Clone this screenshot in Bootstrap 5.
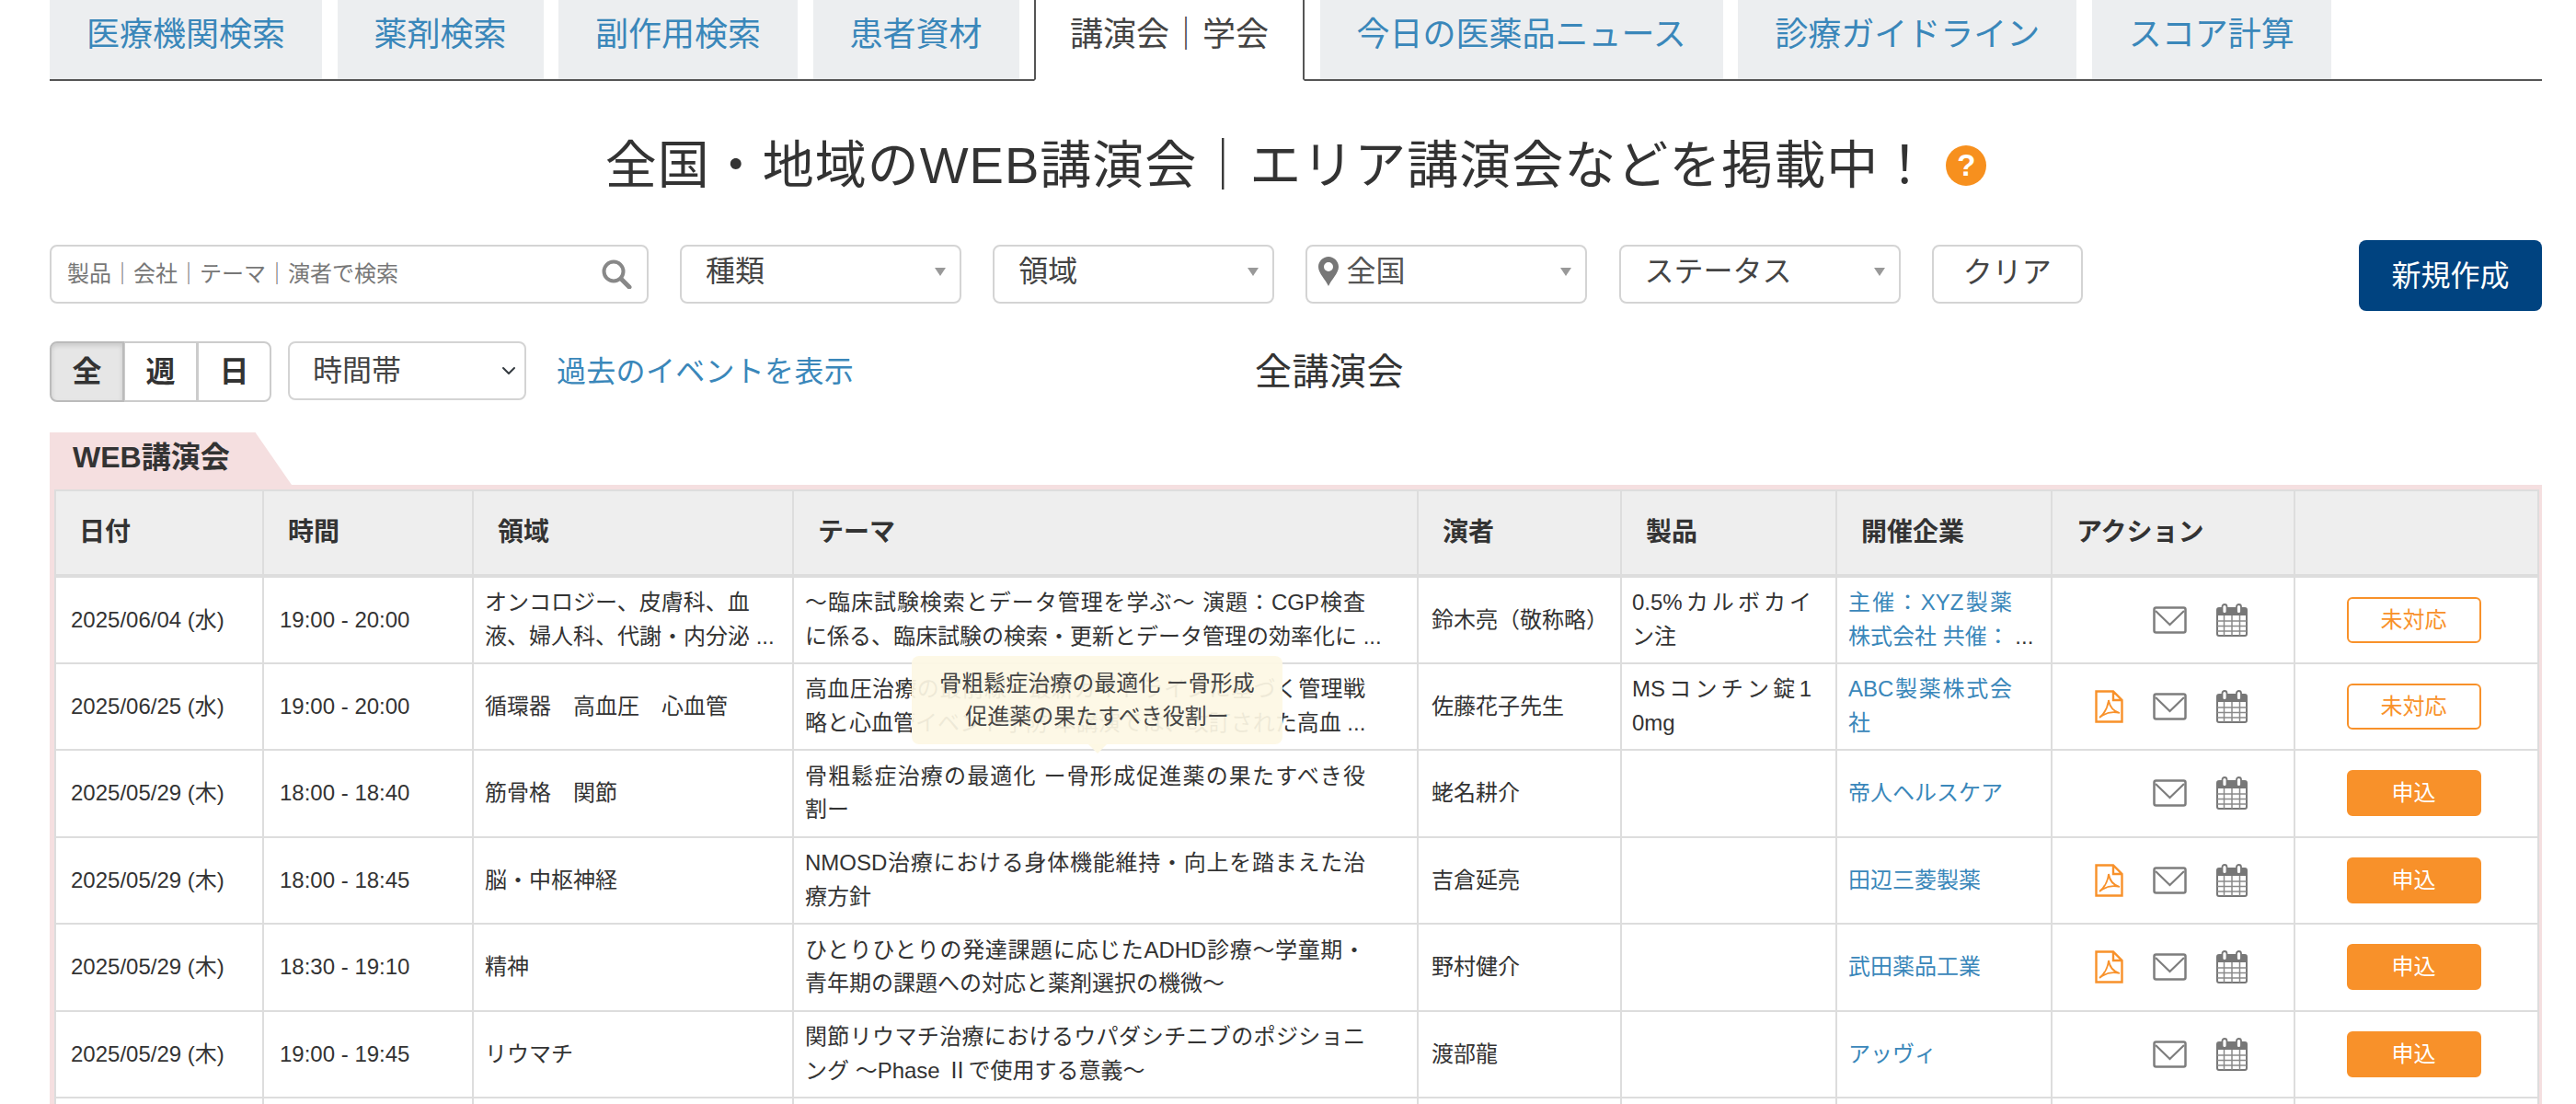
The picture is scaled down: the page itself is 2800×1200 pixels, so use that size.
<!DOCTYPE html>
<html lang="ja">
<head>
    <meta charset="UTF-8">
    <meta name="viewport" content="width=device-width, initial-scale=1.0">
    <title>講演会 | 学会</title>
    <link href="https://cdn.jsdelivr.net/npm/bootstrap@5.3.0/dist/css/bootstrap.min.css" rel="stylesheet">
    <style>
        html, body { height: 100vh; overflow: hidden; }
        body { font-family: "Liberation Sans", "Noto Sans CJK JP", sans-serif; font-size: 24px; color: #333; background: #fff; }
        a { color: #3a87ba; text-decoration: none; }
        .page-wrap { padding: 0 37px 0 54px; }

        .top-tabs { gap: 16.5px; border-bottom: 2px solid #555; height: 88px; flex-wrap: nowrap; }
        .top-tabs .nav-link { font-size: 36px; line-height: 48px; padding: 14px 40px 24px; height: 86px; margin-bottom: 0; background: #eceef0; color: #3a87ba; border: 0; border-radius: 0; }
        .top-tabs .nav-link.active { height: 88px; background: #fff; color: #444; border: 2px solid #555; border-top: 0; border-bottom: 2px solid #fff; padding: 14px 37px 22px; }

        .page-title { font-size: 56px; line-height: 80px; font-weight: 400; letter-spacing: 1px; margin: 52px 0 41px; color: #333; }
        .help-dot { width: 44px; height: 44px; border-radius: 50%; background: #f7901e; color: #fff; font-size: 33px; line-height: 44px; font-weight: 700; letter-spacing: 0; margin-left: 16px; }

        .filter-row { height: 77px; }
        .search-box, .pick-box, .clear-btn { height: 64px; margin-top: 5px; border: 2px solid #d4d4d4; border-radius: 8px; background: #fff; }
        .search-box { width: 651px; padding: 0 16px 0 17px; margin-right: 34px; font-size: 24px; color: #777; }
        .pick-box { width: 306px; margin-right: 34.2px; padding: 0 0 6px 26px; font-size: 32px; color: #444; position: relative; }
        .pick-box::after { content: ""; position: absolute; right: 15px; top: 22.5px; border: 6.5px solid transparent; border-top: 9px solid #999; border-bottom: 0; }
        .pick-box.pin-box { padding-left: 12px; color: #555; }
        .clear-btn { width: 164px; font-size: 32px; line-height: 1; color: #444; padding: 0 0 4px; }
        .new-btn { width: 199px; height: 77px; font-size: 32px; line-height: 1; background: #004380; border: 0; border-radius: 8px; color: #fff; padding: 0; }

        .range-row { margin-top: 33px; height: 66px; }
        .range-group { width: 241px; height: 66px; }
        .range-btn { font-size: 32px; font-weight: 700; line-height: 1; color: #333; background: #fff; border: 2px solid #ccc; width: 80px; padding: 0; border-radius: 8px; }
        .range-btn.active, .range-btn.active:hover { background: #e6e6e6; color: #333; border-color: #bbb; box-shadow: inset 0 3px 5px rgba(0,0,0,.12); }
        .time-select { width: 259px; height: 64px; margin-left: 18px; font-size: 32px; line-height: 1; color: #444; border: 2px solid #d4d4d4; border-radius: 8px; padding: 0 0 0 25px; background-position: right 6px center; background-size: 22px 16px; }
        .past-link { font-size: 32px; letter-spacing: .3px; margin-left: 33px; }
        .all-label { font-size: 40px; letter-spacing: .5px; margin-left: 436px; color: #333; }

        .section-tab { width: 263px; height: 57px; margin-top: 33px; padding: 5px 0 0 25px; font-size: 32px; line-height: 44px; font-weight: 700; background: #f5dfe0; clip-path: polygon(0 0, 85% 0, 100% 100%, 0 100%); }
        .table-frame { border: 5px solid #f5dfe0; position: relative; }
        .event-table { table-layout: fixed; width: 2699px; margin: 0; border-collapse: collapse; border: 2px solid #ddd; }
        .event-table th, .event-table td { border: 2px solid #ddd; vertical-align: middle; color: #333; box-shadow: none; }
        .event-table th { height: 93px; padding: 0 26px; font-size: 28px; font-weight: 700; line-height: 40px; background: #eee; border-bottom-width: 4px; }
        .event-table th:first-child { padding-left: 25px; }
        .event-table td { height: 94.5px; padding: 9px 12px; font-size: 24px; line-height: 36.5px; }
        .event-table td.pad-date { padding-left: 17px; padding-right: 0; }
        .event-table td.pad-date:first-child { padding-left: 16px; }
        .event-table td.pad-wide { padding-left: 14px; padding-right: 0; }
        .event-table td.pad-region { padding-right: 0; }
        .event-table td.pad-theme { padding-right: 56px; }
        .event-table td.pad-product { padding-left: 11px; padding-right: 26px; }
        .event-table td.pad-company { padding-right: 42px; }
        .fit-line { display: block; text-align-last: justify; }
        .next-line { display: block; white-space: nowrap; }

        .icon-row { gap: 32px; padding-right: 38px; }
        .act-icon { display: block; }
        .state-btn { display: block; width: 146px; height: 50px; margin: 0 auto; padding: 0; font-size: 24px; line-height: 1; border-radius: 6px; border: 2px solid #f8912a; transform: translateX(-3px); }
        .state-open { background: #fff; color: #f8912a; }
        .state-apply { background: #f8912a; color: #fff; }

        .tip-pop { position: absolute; left: 932px; top: 181px; width: 403px; height: 96px; padding-top: 12px; text-align: center; font-size: 24px; line-height: 36px; color: #444; background: rgba(253, 248, 228, .93); border-radius: 8px; }
        .tip-pop::after { content: ""; position: absolute; left: 50%; margin-left: -10px; top: 100%; border: 10px solid transparent; border-top-color: #fdf8e4; border-bottom: 0; }
    </style>
</head>
<body>
<svg width="0" height="0" class="position-absolute">
    <symbol id="ic-mail" viewBox="0 0 37 30">
        <rect x="1.5" y="1.5" width="34" height="27" rx="2" fill="none" stroke="#7d7d7d" stroke-width="2.5"/>
        <path d="M3 5 L18.5 20 L34 5" fill="none" stroke="#7d7d7d" stroke-width="2.2"/>
    </symbol>
    <symbol id="ic-cal" viewBox="0 0 34 36">
        <rect x="1" y="5" width="32" height="30" rx="2" fill="#fff" stroke="#777" stroke-width="2"/>
        <rect x="1" y="5" width="32" height="8" fill="#777"/>
        <path d="M1 19 H33 M1 24.5 H33 M1 30 H33 M8.5 13 V35 M17 13 V35 M25.5 13 V35" stroke="#8a8a8a" stroke-width="1.5"/>
        <rect x="6.5" y="1" width="5" height="10" rx="2.5" fill="#fff" stroke="#777" stroke-width="1.8"/>
        <rect x="22" y="1" width="5" height="10" rx="2.5" fill="#fff" stroke="#777" stroke-width="1.8"/>
    </symbol>
    <symbol id="ic-pdf" viewBox="0 0 31 36">
        <path d="M1.5 1.5 H20 L29.5 11 V34.5 H1.5 Z M20 1.5 V11 H29.5" fill="none" stroke="#f8912a" stroke-width="2.4"/>
        <path d="M5 30 C10 26 14 19 15 11 C16 18 20 23 27 25 C19 23 11 25 5 30 Z" fill="none" stroke="#f8912a" stroke-width="1.8"/>
    </symbol>
</svg>

<div class="page-wrap">
    <ul class="nav nav-tabs top-tabs">
        <li class="nav-item"><a class="nav-link" href="#">医療機関検索</a></li>
        <li class="nav-item"><a class="nav-link" href="#">薬剤検索</a></li>
        <li class="nav-item"><a class="nav-link" href="#">副作用検索</a></li>
        <li class="nav-item"><a class="nav-link" href="#">患者資材</a></li>
        <li class="nav-item"><a class="nav-link active" href="#">講演会｜学会</a></li>
        <li class="nav-item"><a class="nav-link" href="#">今日の医薬品ニュース</a></li>
        <li class="nav-item"><a class="nav-link" href="#">診療ガイドライン</a></li>
        <li class="nav-item"><a class="nav-link" href="#">スコア計算</a></li>
    </ul>

    <h1 class="page-title d-flex justify-content-center align-items-center">全国・地域のWEB講演会｜エリア講演会などを掲載中！<span class="help-dot d-inline-block text-center">?</span></h1>

    <div class="filter-row d-flex align-items-start">
        <div class="search-box d-flex align-items-center justify-content-between">
            <span>製品｜会社｜テーマ｜演者で検索</span>
            <svg width="34" height="32" viewBox="0 0 34 32"><circle cx="14" cy="13" r="10.5" fill="none" stroke="#888" stroke-width="4"/><path d="M22 21 L31 30" stroke="#888" stroke-width="5" stroke-linecap="round"/></svg>
        </div>
        <div class="pick-box d-flex align-items-center">種類</div>
        <div class="pick-box d-flex align-items-center">領域</div>
        <div class="pick-box pin-box d-flex align-items-center gap-2">
            <svg width="22" height="32" viewBox="0 0 22 32"><path fill="#777" fill-rule="evenodd" d="M11 0 C17 0 22 5 22 11 C22 18 14 25 11 32 C8 25 0 18 0 11 C0 5 5 0 11 0 Z M11 6 A5 5 0 1 0 11 16 A5 5 0 1 0 11 6 Z"/></svg>
            <span>全国</span>
        </div>
        <div class="pick-box d-flex align-items-center">ステータス</div>
        <button type="button" class="btn clear-btn">クリア</button>
        <button type="button" class="btn new-btn ms-auto">新規作成</button>
    </div>

    <div class="range-row d-flex align-items-start">
        <div class="btn-group range-group">
            <button type="button" class="btn range-btn active">全</button>
            <button type="button" class="btn range-btn">週</button>
            <button type="button" class="btn range-btn">日</button>
        </div>
        <select class="form-select time-select"><option>時間帯</option></select>
        <a class="past-link align-self-center" href="#">過去のイベントを表示</a>
        <span class="all-label align-self-center">全講演会</span>
    </div>

    <div class="section-tab">WEB講演会</div>
    <div class="table-frame">
        <table class="table event-table">
            <colgroup>
                <col style="width:226px"><col style="width:228px"><col style="width:348px"><col style="width:679px"><col style="width:221px"><col style="width:234px"><col style="width:234px"><col style="width:264px"><col style="width:265px">
            </colgroup>
            <thead>
                <tr><th>日付</th><th>時間</th><th>領域</th><th>テーマ</th><th>演者</th><th>製品</th><th>開催企業</th><th>アクション</th><th></th></tr>
            </thead>
            <tbody>
                <tr>
                    <td class="pad-date">2025/06/04 (水)</td>
                    <td class="pad-date">19:00 - 20:00</td>
                    <td class="pad-region">オンコロジー、皮膚科、血<br>液、婦人科、代謝・内分泌 ...</td>
                    <td class="pad-theme"><span class="fit-line">～臨床試験検索とデータ管理を学ぶ～ 演題：CGP検査</span><span class="next-line">に係る、臨床試験の検索・更新とデータ管理の効率化に ...</span></td>
                    <td class="pad-wide">鈴木亮（敬称略）</td>
                    <td class="pad-product"><span class="fit-line">0.5%カルボカイ</span>ン注</td>
                    <td class="pad-company"><a href="#"><span class="fit-line">主催：XYZ製薬</span></a><span class="next-line"><a href="#">株式会社 共催：</a> ...</span></td>
                    <td><div class="icon-row d-flex justify-content-end align-items-center"><svg class="act-icon" width="37" height="30"><use href="#ic-mail"/></svg><svg class="act-icon" width="34" height="36"><use href="#ic-cal"/></svg></div></td>
                    <td><button type="button" class="btn state-btn state-open">未対応</button></td>
                </tr>
                <tr>
                    <td class="pad-date">2025/06/25 (水)</td>
                    <td class="pad-date">19:00 - 20:00</td>
                    <td class="pad-region">循環器　高血圧　心血管</td>
                    <td class="pad-theme"><span class="fit-line">高血圧治療の最前線・最新ガイドラインに基づく管理戦</span><span class="next-line">略と心血管イベント予防 本講演では、改訂された高血 ...</span></td>
                    <td class="pad-wide">佐藤花子先生</td>
                    <td class="pad-product"><span class="fit-line">MSコンチン錠1</span>0mg</td>
                    <td class="pad-company"><a href="#"><span class="fit-line">ABC製薬株式会</span>社</a></td>
                    <td><div class="icon-row d-flex justify-content-end align-items-center"><svg class="act-icon" width="31" height="36"><use href="#ic-pdf"/></svg><svg class="act-icon" width="37" height="30"><use href="#ic-mail"/></svg><svg class="act-icon" width="34" height="36"><use href="#ic-cal"/></svg></div></td>
                    <td><button type="button" class="btn state-btn state-open">未対応</button></td>
                </tr>
                <tr>
                    <td class="pad-date">2025/05/29 (木)</td>
                    <td class="pad-date">18:00 - 18:40</td>
                    <td class="pad-region">筋骨格　関節</td>
                    <td class="pad-theme"><span class="fit-line">骨粗鬆症治療の最適化 ー骨形成促進薬の果たすべき役</span>割ー</td>
                    <td class="pad-wide">蛯名耕介</td>
                    <td class="pad-product"></td>
                    <td class="pad-company"><a href="#">帝人ヘルスケア</a></td>
                    <td><div class="icon-row d-flex justify-content-end align-items-center"><svg class="act-icon" width="37" height="30"><use href="#ic-mail"/></svg><svg class="act-icon" width="34" height="36"><use href="#ic-cal"/></svg></div></td>
                    <td><button type="button" class="btn state-btn state-apply">申込</button></td>
                </tr>
                <tr>
                    <td class="pad-date">2025/05/29 (木)</td>
                    <td class="pad-date">18:00 - 18:45</td>
                    <td class="pad-region">脳・中枢神経</td>
                    <td class="pad-theme"><span class="fit-line">NMOSD治療における身体機能維持・向上を踏まえた治</span>療方針</td>
                    <td class="pad-wide">吉倉延亮</td>
                    <td class="pad-product"></td>
                    <td class="pad-company"><a href="#">田辺三菱製薬</a></td>
                    <td><div class="icon-row d-flex justify-content-end align-items-center"><svg class="act-icon" width="31" height="36"><use href="#ic-pdf"/></svg><svg class="act-icon" width="37" height="30"><use href="#ic-mail"/></svg><svg class="act-icon" width="34" height="36"><use href="#ic-cal"/></svg></div></td>
                    <td><button type="button" class="btn state-btn state-apply">申込</button></td>
                </tr>
                <tr>
                    <td class="pad-date">2025/05/29 (木)</td>
                    <td class="pad-date">18:30 - 19:10</td>
                    <td class="pad-region">精神</td>
                    <td class="pad-theme"><span class="fit-line">ひとりひとりの発達課題に応じたADHD診療〜学童期・</span>青年期の課題への対応と薬剤選択の機微〜</td>
                    <td class="pad-wide">野村健介</td>
                    <td class="pad-product"></td>
                    <td class="pad-company"><a href="#">武田薬品工業</a></td>
                    <td><div class="icon-row d-flex justify-content-end align-items-center"><svg class="act-icon" width="31" height="36"><use href="#ic-pdf"/></svg><svg class="act-icon" width="37" height="30"><use href="#ic-mail"/></svg><svg class="act-icon" width="34" height="36"><use href="#ic-cal"/></svg></div></td>
                    <td><button type="button" class="btn state-btn state-apply">申込</button></td>
                </tr>
                <tr>
                    <td class="pad-date">2025/05/29 (木)</td>
                    <td class="pad-date">19:00 - 19:45</td>
                    <td class="pad-region">リウマチ</td>
                    <td class="pad-theme"><span class="fit-line">関節リウマチ治療におけるウパダシチニブのポジショニ</span>ング 〜Phase Ⅱで使用する意義〜</td>
                    <td class="pad-wide">渡部龍</td>
                    <td class="pad-product"></td>
                    <td class="pad-company"><a href="#">アッヴィ</a></td>
                    <td><div class="icon-row d-flex justify-content-end align-items-center"><svg class="act-icon" width="37" height="30"><use href="#ic-mail"/></svg><svg class="act-icon" width="34" height="36"><use href="#ic-cal"/></svg></div></td>
                    <td><button type="button" class="btn state-btn state-apply">申込</button></td>
                </tr>
                <tr><td></td><td></td><td></td><td></td><td></td><td></td><td></td><td></td><td></td></tr>
            </tbody>
        </table>
        <div class="tip-pop">骨粗鬆症治療の最適化 ー骨形成<br>促進薬の果たすべき役割ー</div>
    </div>
</div>
<script src="https://cdn.jsdelivr.net/npm/bootstrap@5.3.0/dist/js/bootstrap.bundle.min.js"></script>
</body>
</html>
